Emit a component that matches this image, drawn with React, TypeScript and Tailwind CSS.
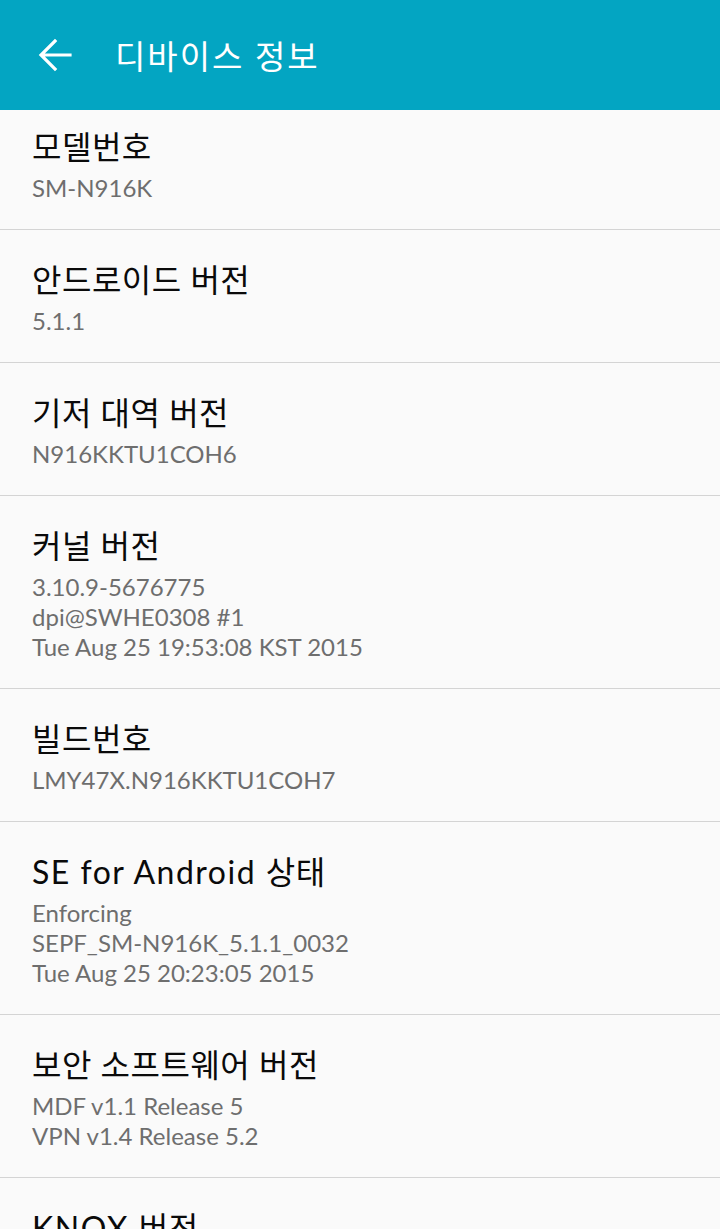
import React from "react";

type Item = { title: React.ReactNode; lines: string[] };

const items: Item[] = [
  { title: "모델번호", lines: ["SM-N916K"] },
  { title: "안드로이드 버전", lines: ["5.1.1"] },
  { title: "기저 대역 버전", lines: ["N916KKTU1COH6"] },
  {
    title: "커널 버전",
    lines: ["3.10.9-5676775", "dpi@SWHE0308 #1", "Tue Aug 25 19:53:08 KST 2015"],
  },
  { title: "빌드번호", lines: ["LMY47X.N916KKTU1COH7"] },
  {
    title: (
      <>
        <span className="tracking-[1.5px]">SE for Android </span>상태
      </>
    ),
    lines: ["Enforcing", "SEPF_SM-N916K_5.1.1_0032", "Tue Aug 25 20:23:05 2015"],
  },
  { title: "보안 소프트웨어 버전", lines: ["MDF v1.1 Release 5", "VPN v1.4 Release 5.2"] },
  {
    title: (
      <>
        <span className="tracking-[1.5px]">KNOX </span>버전
      </>
    ),
    lines: ["KNOX 2.4.1"],
  },
];

export default function App() {
  return (
    <div
      className="w-[720px] h-[1229px] overflow-hidden bg-[#fafafa] flex flex-col"
      style={{ fontFamily: 'Lato, "Noto Sans CJK KR", sans-serif' }}
    >
      <header className="h-[110px] shrink-0 bg-[#03a5c2] flex items-center">
        <div className="w-[112px] flex justify-center">
          <svg width="34" height="34" viewBox="0 0 34 34" className="ml-[-2px]">
            <path
              d="M32 17 H4 M17 3 L3 17 L17 31"
              stroke="white"
              strokeWidth="3.2"
              fill="none"
              strokeLinecap="square"
            />
          </svg>
        </div>
        <h1 className="text-white text-[33px] leading-[40px] tracking-[2px] ml-[3px] mt-[2px]">
          디바이스 정보
        </h1>
      </header>
      <div className="flex flex-col">
        {items.map((it, i) => (
          <div
            key={i}
            className={`px-[32px] pb-[26px] border-b border-[#d4d4d4] ${
              i === 0 ? "pt-[17px]" : "pt-[30px]"
            }`}
          >
            <div className="text-[32px] leading-[40px] text-[#0a0a0a] tracking-[0.5px] whitespace-nowrap">
              {it.title}
            </div>
            <div className="mt-[6px]">
              {it.lines.map((l, j) => (
                <div key={j} className="text-[24px] leading-[30px] text-[#6e6e6e] whitespace-nowrap">
                  {l}
                </div>
              ))}
            </div>
          </div>
        ))}
      </div>
    </div>
  );
}
